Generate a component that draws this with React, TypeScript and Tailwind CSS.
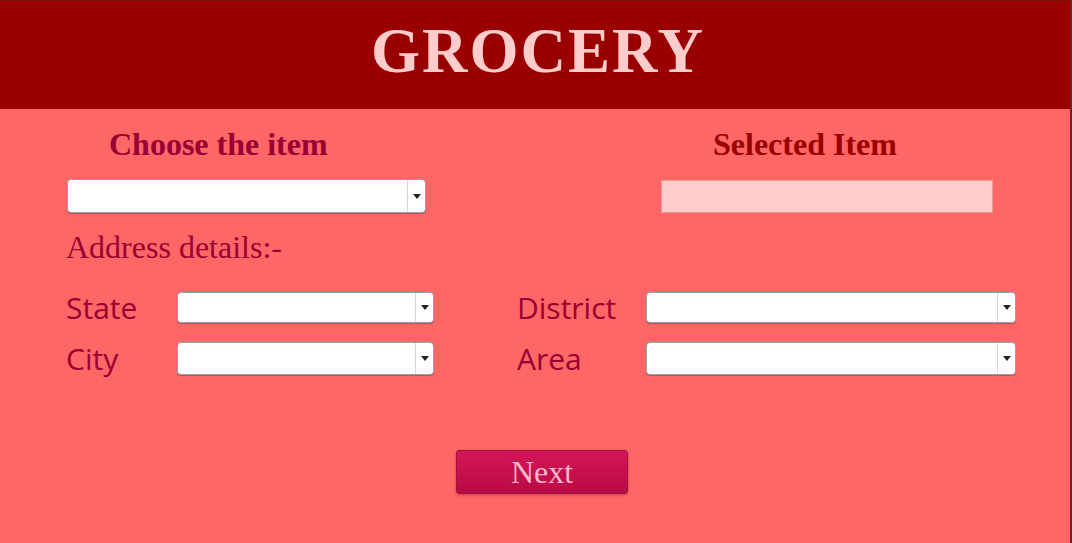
import { useState } from "react";

const serif = "font-['Liberation_Serif',_'Times_New_Roman',serif]";
const sans = "font-['Open_Sans',_'Noto_Sans',sans-serif]";

function Dropdown({ className, value, onChange }: { className: string; value: string; onChange: (v: string) => void }) {
  return (
    <div className={`flex bg-white rounded-[4px] border border-[#9aa0b4] shadow-[0_1px_1px_rgba(0,0,0,0.25)] ${className}`}>
      <select
        value={value}
        onChange={(e) => onChange(e.target.value)}
        className="flex-1 min-w-0 appearance-none bg-transparent outline-none px-1 text-sm"
      >
        <option value=""></option>
        <option value="1">Option 1</option>
      </select>
      <div className="w-[18px] flex items-center justify-center border-l border-[#d8d8d8]">
        <svg width="8" height="5" viewBox="0 0 8 5">
          <path d="M0 0 H8 L4 5 Z" fill="#222" />
        </svg>
      </div>
    </div>
  );
}

export default function App() {
  const [item, setItem] = useState("");
  const [state, setState] = useState("");
  const [district, setDistrict] = useState("");
  const [city, setCity] = useState("");
  const [area, setArea] = useState("");

  return (
    <div className="w-[1072px] h-[543px] flex overflow-hidden">
      <div className="flex-1 flex flex-col bg-[#ff6666]">
        {/* header */}
        <div className="h-[109px] bg-[#990000] border-t border-[#7a1010] flex items-center justify-center">
          <h1 className={`${serif} font-bold text-[63px] leading-none text-[#ffcccc] tracking-[2px] pl-[6px] -mt-[7px]`}>GROCERY</h1>
        </div>

        <div className="flex pt-[17px]">
          {/* choose item */}
          <div className="w-[661px] pl-[67px]">
            <h2 className={`${serif} font-bold text-[32px] leading-[36px] text-[#990033] pl-[42px]`}>Choose the item</h2>
            <Dropdown className="mt-[17px] w-[359px] h-[34px] border-[#8a94b8]" value={item} onChange={setItem} />
          </div>
          {/* selected item */}
          <div>
            <h2 className={`${serif} font-bold text-[32px] leading-[36px] text-[#990000] pl-[52px]`}>Selected Item</h2>
            <input
              readOnly
              value={item ? "Option 1" : ""}
              className="mt-[18px] w-[332px] h-[33px] bg-[#ffcccc] border border-[#e89a9a] outline-none px-2"
            />
          </div>
        </div>

        <p className={`${serif} text-[32px] leading-[36px] text-[#990033] pl-[66px] mt-[16px]`}>Address details:-</p>

        <div className={`grid grid-cols-[111px_257px_83px_129px_370px] items-center gap-y-[19px] pl-[66px] mt-[27px] text-[30px] text-[#990033] ${sans}`}>
          <span className="leading-[31px]">State</span>
          <Dropdown className="h-[31px]" value={state} onChange={setState} />
          <span />
          <span className="leading-[31px]">District</span>
          <Dropdown className="h-[31px]" value={district} onChange={setDistrict} />

          <span className="leading-[33px]">City</span>
          <Dropdown className="h-[33px]" value={city} onChange={setCity} />
          <span />
          <span className="leading-[33px]">Area</span>
          <Dropdown className="h-[33px]" value={area} onChange={setArea} />
        </div>

        <div className="flex justify-center mt-[75px] pl-[14px]">
          <button
            className={`${serif} w-[172px] h-[44px] rounded-[3px] border border-[#a01040] bg-[linear-gradient(#d4165a,#c8104e_50%,#b80a45)] text-[#ffb8cc] text-[32px] leading-none shadow-[0_1px_3px_rgba(120,0,30,0.4)]`}
          >
            Next
          </button>
        </div>
      </div>
      <div className="w-[2px] bg-[#6b2424]" />
    </div>
  );
}
